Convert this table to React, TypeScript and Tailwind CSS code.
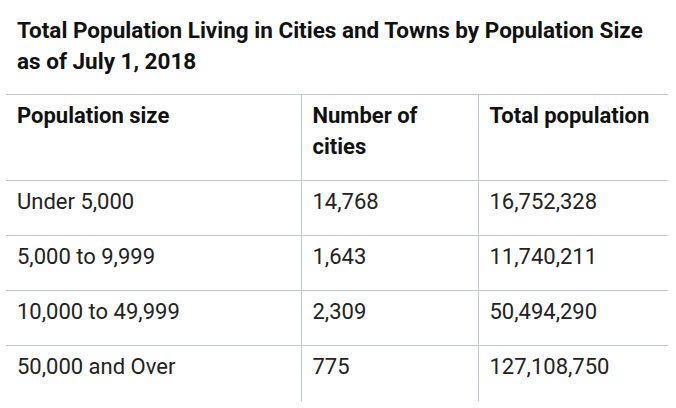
const rows = [
  ["Under 5,000", "14,768", "16,752,328"],
  ["5,000 to 9,999", "1,643", "11,740,211"],
  ["10,000 to 49,999", "2,309", "50,494,290"],
  ["50,000 and Over", "775", "127,108,750"],
];

export default function App() {
  return (
    <div className="h-[408px] w-[676px] overflow-hidden bg-white font-['Roboto',sans-serif] text-[#222]">
      <h2 className="pl-[17px] pr-[10px] pt-[15px] text-[22.5px] font-bold leading-[31px] text-[#111]">
        Total Population Living in Cities and Towns by Population Size as of
        July 1, 2018
      </h2>
      <table className="ml-[6px] mt-[17px] w-[662px] table-fixed border-collapse text-[22px] leading-[31px]">
        <colgroup>
          <col className="w-[295px]" />
          <col className="w-[177px]" />
          <col className="w-[190px]" />
        </colgroup>
        <thead>
          <tr className="h-[86px] border-t border-[#c2c8ce] align-top">
            <th className="px-[11px] pt-[5px] text-left font-bold text-[#111]">
              Population size
            </th>
            <th className="border-l border-[#c2c8ce] px-[11px] pt-[5px] text-left font-bold text-[#111]">
              Number of cities
            </th>
            <th className="border-l border-[#c2c8ce] px-[11px] pt-[5px] text-left font-bold text-[#111]">
              Total population
            </th>
          </tr>
        </thead>
        <tbody>
          {rows.map((r) => (
            <tr key={r[0]} className="h-[55px] border-t border-[#c2c8ce] align-top">
              <td className="px-[11px] pt-[5px]">{r[0]}</td>
              <td className="border-l border-[#c2c8ce] px-[11px] pt-[5px]">{r[1]}</td>
              <td className="border-l border-[#c2c8ce] px-[11px] pt-[5px]">{r[2]}</td>
            </tr>
          ))}
        </tbody>
      </table>
    </div>
  );
}
